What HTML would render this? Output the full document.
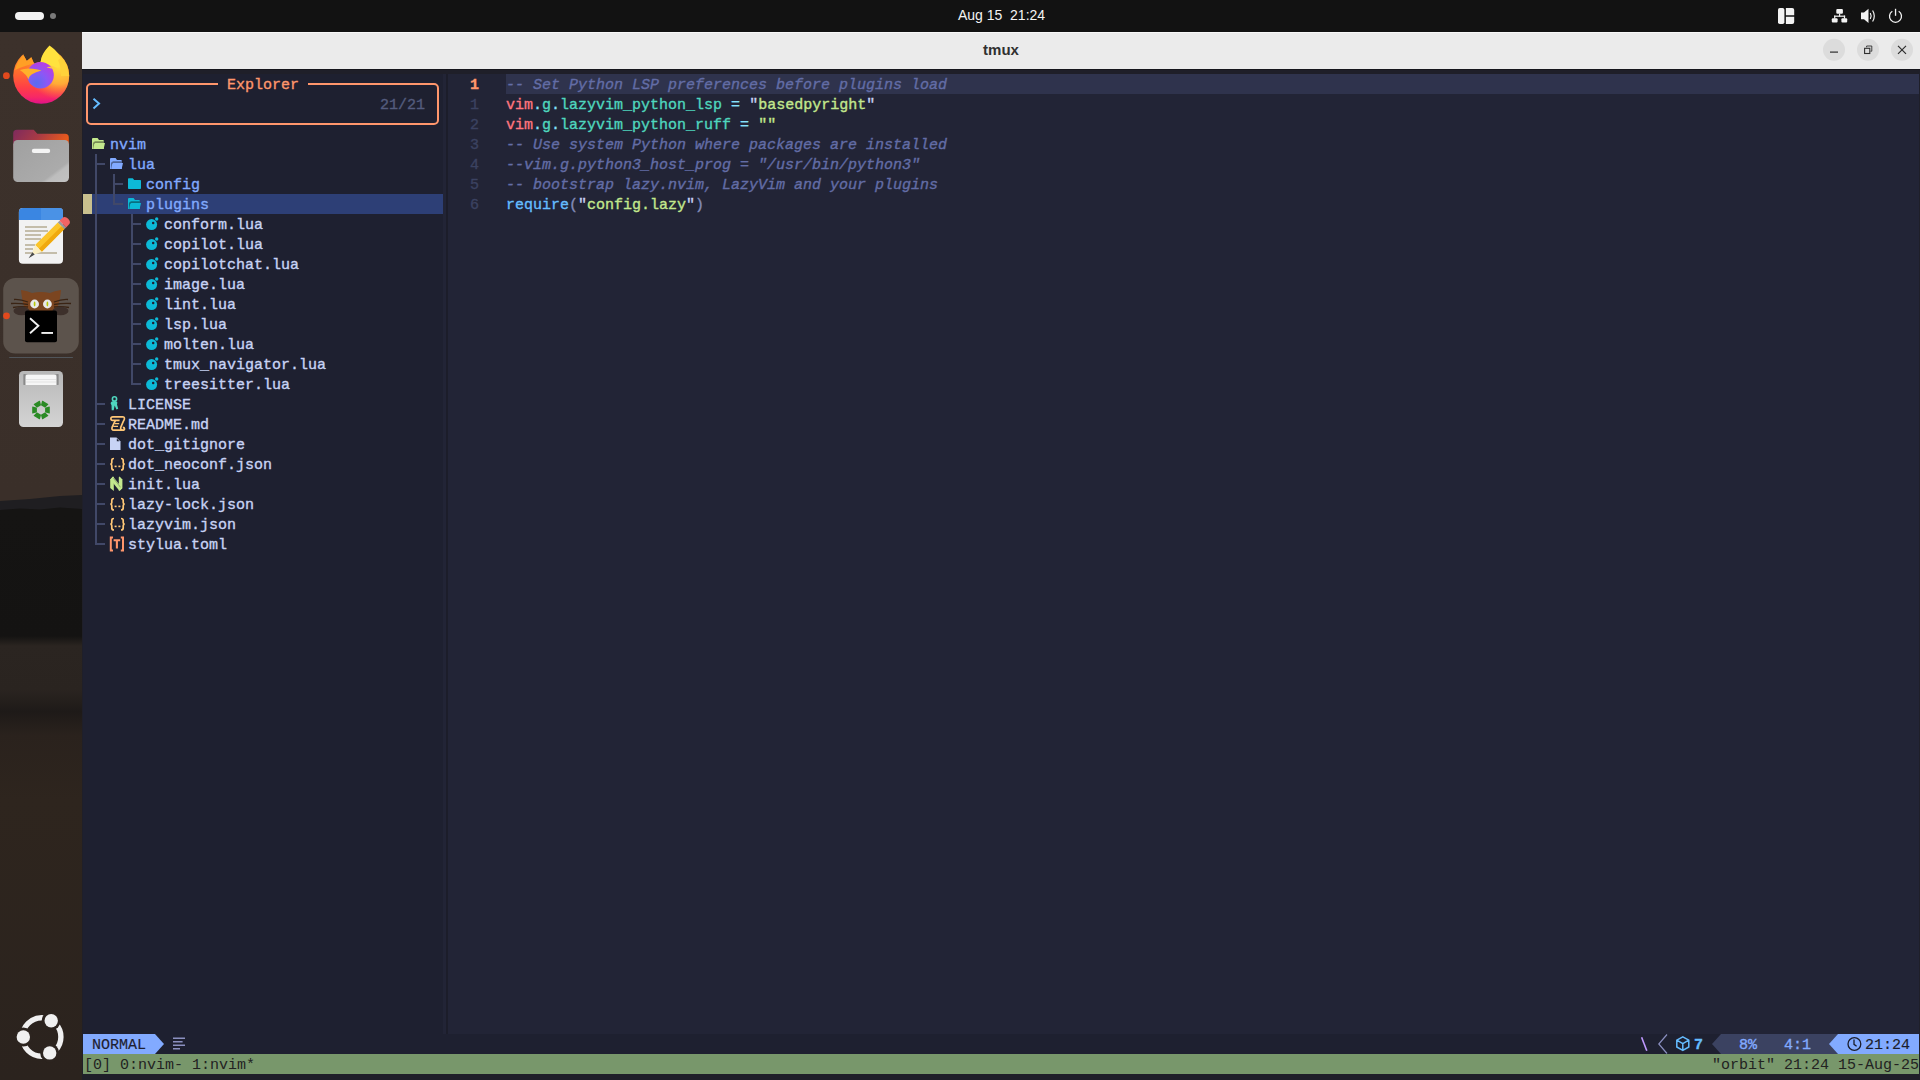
<!DOCTYPE html><html><head><meta charset="utf-8"><style>
html,body{margin:0;padding:0;}
body{width:1920px;height:1080px;position:relative;overflow:hidden;background:#1f1f29;font-family:"Liberation Mono",monospace;}
.t{position:absolute;white-space:pre;font-family:"Liberation Mono",monospace;font-size:15px;line-height:20px;height:20px;padding-top:2px;box-sizing:border-box;-webkit-text-stroke:0.35px currentColor;}
.s{position:absolute;}
.ns{-webkit-text-stroke:0;}
svg{position:absolute;overflow:visible;}
</style></head><body>
<div style="position:absolute;left:0px;top:0px;width:1920px;height:32px;background:#121212"></div>
<div style="position:absolute;left:15px;top:12px;width:29px;height:8px;background:#f2f2f2;border-radius:4px"></div>
<div style="position:absolute;left:50px;top:13px;width:6px;height:6px;background:#7a7a7a;border-radius:3px"></div>
<div style="position:absolute;left:0;top:5px;width:2003px;text-align:center;font-family:'Liberation Sans',sans-serif;font-size:14px;line-height:20px;color:#f4f4f4">Aug 15&nbsp;&nbsp;21:24</div>
<div style="position:absolute;left:0px;top:32px;width:82px;height:1048px;background:linear-gradient(to bottom,#3c312b 0px,#3b302a 268px,#3a2f29 462px,#3a2f29 478px,#151413 480px,#141312 604px,#2b2521 614px,#2a2420 658px,#1e1a18 680px,#2a221d 703px,#2e251e 768px,#2b231e 1048px)"></div>
<svg style="left:0;top:490px" width="82" height="24"><path d="M0,11 L30,9 L60,6 L82,5 V22 H0 Z" fill="#1f1e21"/><path d="M0,20 L20,18.5 L40,19.5 L60,17.5 L82,19 V24 H0 Z" fill="#151413"/></svg>
<svg style="left:0;top:32px" width="82" height="1048" viewBox="0 32 82 1048">
<defs>
<linearGradient id="ffb" x1="0.5" y1="0" x2="0.5" y2="1"><stop offset="0" stop-color="#ffa028"/><stop offset="0.45" stop-color="#ff6a2e"/><stop offset="0.72" stop-color="#ff3d48"/><stop offset="0.88" stop-color="#f72866"/><stop offset="1" stop-color="#e0118a"/></linearGradient>
<radialGradient id="ffy" cx="0.82" cy="0.32" r="0.6"><stop offset="0" stop-color="#ffe23e" stop-opacity="1"/><stop offset="0.55" stop-color="#ffbc36" stop-opacity="0.85"/><stop offset="1" stop-color="#ff8a30" stop-opacity="0"/></radialGradient>
<radialGradient id="ffg" cx="0.35" cy="0.8" r="0.9"><stop offset="0" stop-color="#5a6cf0"/><stop offset="0.45" stop-color="#8a58f6"/><stop offset="1" stop-color="#c038e0"/></radialGradient>
<linearGradient id="fltab" x1="0" y1="0" x2="1" y2="0.3"><stop offset="0" stop-color="#7d2a5e"/><stop offset="0.5" stop-color="#a83a45"/><stop offset="1" stop-color="#e85a1c"/></linearGradient>
<linearGradient id="flbody" x1="0" y1="0" x2="1" y2="1"><stop offset="0" stop-color="#a0a0a0"/><stop offset="0.75" stop-color="#ababab"/><stop offset="0.8" stop-color="#bdbdbd"/><stop offset="1" stop-color="#c2c2c2"/></linearGradient>
<linearGradient id="trash" x1="0" y1="0" x2="0" y2="1"><stop offset="0" stop-color="#b8b8b8"/><stop offset="1" stop-color="#d4d4d4"/></linearGradient>
</defs>
<!-- firefox -->
<circle cx="6.4" cy="75.7" r="3.4" fill="#e2491d"/>
<circle cx="41.2" cy="75.8" r="28" fill="url(#ffb)"/><circle cx="41.2" cy="75.8" r="28" fill="url(#ffy)"/>
<path d="M23.6,55.2 L26.8,61 L31.3,57.2 L34,63.5 L40.5,61.8 Q42.5,54 49.5,45.6 L49.5,40 L20,40 Z" fill="#3b302a"/>
<path d="M49.5,45.6 C44.5,51 41,56 40.8,62 L58,68 C62,64 62,58 60.5,58.5 C58,52 54,49 49.5,45.6 Z" fill="#ffe23e"/>
<path d="M60.5,58.5 C64,62 68,68 69,76 L61,76 C61,70 60,64 58,60 Z" fill="#ffd23a"/>
<path d="M15,70 Q17,61 23.6,55.2 L26.8,61 L31.3,57.2 L34,63.5 Q26,65 15,70 Z" fill="#ff9f25"/>
<circle cx="40.5" cy="75.2" r="13.3" fill="url(#ffg)"/>
<path d="M19.8,70 Q26,67.6 33,68.8 Q38,69.6 41.5,70.6 Q35.5,72.4 32,74.2 Q28.6,76.5 28.6,79.6 Q26.6,74.4 19.8,70 Z" fill="#ffb12a"/>
<path d="M46.5,67.2 Q50.5,66 53.5,68.8 Q50,68.6 46.5,67.2 Z" fill="#ffcc44"/>
<!-- files -->
<path d="M13.2,133.5 Q13.2,129.8 17,129.8 H33.7 L37.3,133.8 H65 Q68.8,133.8 68.8,137.5 V150 H13.2 Z" fill="url(#fltab)"/>
<rect x="13.2" y="139.9" width="55.8" height="42.1" rx="4.5" fill="url(#flbody)"/>
<rect x="31.8" y="148.8" width="18.4" height="4.2" rx="2.1" fill="#f4f4f4"/>
<!-- text editor -->
<rect x="18.9" y="208" width="44.1" height="55.7" rx="4" fill="#f2f2f2"/>
<path d="M18.9,220 V212 Q18.9,208 22.9,208 H59 Q63,208 63,212 V220 Z" fill="#3a86e2"/>
<path d="M41,208 H59 Q63,208 63,212 V220 H41 Z" fill="#4a92e6"/>
<g fill="#c4bdaa"><rect x="25" y="226" width="22" height="2"/><rect x="25" y="230" width="23" height="2"/><rect x="25" y="234" width="16" height="2"/><rect x="25" y="238" width="16" height="2"/><rect x="25" y="244" width="10" height="2"/><rect x="25" y="248" width="8" height="2"/><rect x="25" y="252" width="32" height="2"/></g>
<g transform="translate(50.5,236.4) rotate(-45)">
<rect x="-17" y="-4.7" width="32" height="9.4" fill="#fbc52a"/>
<rect x="-17" y="0.6" width="32" height="4.1" fill="#f0a90e"/>
<rect x="15" y="-4.7" width="2.4" height="9.4" fill="#9a9a9a"/>
<path d="M17.4,-4.7 H21 Q25,-4.7 25,0 Q25,4.7 21,4.7 H17.4 Z" fill="#f26464"/>
<path d="M-17,-4.7 L-27.5,0 L-17,4.7 Z" fill="#fbefc4"/>
<path d="M-24,-1.6 L-31,0 L-24,1.6 Z" fill="#4a4a4a"/>
</g>
<!-- terminal active -->
<rect x="3.2" y="278" width="75.6" height="75.6" rx="12" fill="#5c534c"/>
<circle cx="6.5" cy="315.8" r="3.4" fill="#e2491d"/>
<path d="M21,290 Q28,291 32,293 Q41,291 50,293 Q54,291 61,290 Q60,300 58,306 L56,311 H26 L24,306 Q22,300 21,290 Z" fill="#7b4520"/>
<g stroke="#3a2414" stroke-width="1.3" fill="none">
<path d="M28,302 Q20,299 14,299.5"/><path d="M28,304.5 Q19,303 11,303.5"/><path d="M28,307 Q20,306 13,307.5"/>
<path d="M54,302 Q62,299 68,299.5"/><path d="M54,304.5 Q63,303 71,303.5"/><path d="M54,307 Q62,306 69,307.5"/>
</g>
<circle cx="34.6" cy="304" r="4.4" fill="#e8e8e8"/><circle cx="47.4" cy="304" r="4.4" fill="#e8e8e8"/>
<ellipse cx="34.6" cy="304" rx="0.9" ry="2.4" fill="#b8c808"/><ellipse cx="47.4" cy="304" rx="0.9" ry="2.4" fill="#b8c808"/>
<ellipse cx="21.5" cy="311" rx="8" ry="4.2" fill="#3d302b"/><ellipse cx="60.5" cy="311" rx="8" ry="4.2" fill="#3d302b"/>
<rect x="25" y="310.6" width="32" height="31.6" rx="2" fill="#000"/>
<path d="M30,318.3 L38.4,325.8 L30,333.3" fill="none" stroke="#f0f0f0" stroke-width="1.9"/>
<rect x="41.4" y="332" width="11.6" height="1.9" fill="#f0f0f0"/>
<rect x="9.2" y="357" width="63.7" height="1" fill="#50555a"/>
<!-- trash -->
<rect x="19" y="371" width="44" height="56" rx="4.5" fill="url(#trash)"/>
<rect x="23.5" y="374" width="35" height="11" rx="1.5" fill="#9e9e9e"/>
<path d="M25,385 V377 Q25,374.5 28,374.5 H54 Q57,374.5 57,377 V385 Z" fill="#f6f6f6"/><path d="M26,379.5 H56 M26,382 H56" stroke="#dedede" stroke-width="0.8"/><rect x="23.5" y="374" width="2" height="11" fill="#8a8a8a"/><rect x="56.5" y="374" width="2" height="11" fill="#8a8a8a"/>
<g transform="translate(41,410)" fill="#2a8a24"><path d="M-2.3,-2 Q-2.3,-2.5 -1.8,-2.6 L1.9,-3.6 Q2.4,-3.6 2.4,-3.1 L2.4,3.1 Q2.4,3.6 1.9,3.6 L-1.8,2.6 Q-2.3,2.5 -2.3,2 Z" transform="rotate(0) translate(6.4,0)"/><path d="M-2.3,-2 Q-2.3,-2.5 -1.8,-2.6 L1.9,-3.6 Q2.4,-3.6 2.4,-3.1 L2.4,3.1 Q2.4,3.6 1.9,3.6 L-1.8,2.6 Q-2.3,2.5 -2.3,2 Z" transform="rotate(60) translate(6.4,0)"/><path d="M-2.3,-2 Q-2.3,-2.5 -1.8,-2.6 L1.9,-3.6 Q2.4,-3.6 2.4,-3.1 L2.4,3.1 Q2.4,3.6 1.9,3.6 L-1.8,2.6 Q-2.3,2.5 -2.3,2 Z" transform="rotate(120) translate(6.4,0)"/><path d="M-2.3,-2 Q-2.3,-2.5 -1.8,-2.6 L1.9,-3.6 Q2.4,-3.6 2.4,-3.1 L2.4,3.1 Q2.4,3.6 1.9,3.6 L-1.8,2.6 Q-2.3,2.5 -2.3,2 Z" transform="rotate(180) translate(6.4,0)"/><path d="M-2.3,-2 Q-2.3,-2.5 -1.8,-2.6 L1.9,-3.6 Q2.4,-3.6 2.4,-3.1 L2.4,3.1 Q2.4,3.6 1.9,3.6 L-1.8,2.6 Q-2.3,2.5 -2.3,2 Z" transform="rotate(240) translate(6.4,0)"/><path d="M-2.3,-2 Q-2.3,-2.5 -1.8,-2.6 L1.9,-3.6 Q2.4,-3.6 2.4,-3.1 L2.4,3.1 Q2.4,3.6 1.9,3.6 L-1.8,2.6 Q-2.3,2.5 -2.3,2 Z" transform="rotate(300) translate(6.4,0)"/></g>
<!-- ubuntu logo -->
<g transform="translate(41.7,1037)">
<circle r="19.2" fill="none" stroke="#f0f0f0" stroke-width="5.4"/>
<g fill="#2c241f">
<circle cx="-18.4" cy="0" r="9.5"/><circle cx="9.5" cy="-16.2" r="9.5"/><circle cx="8" cy="15.9" r="9.5"/>
</g>
<g fill="#f0f0f0">
<circle cx="-18.4" cy="0" r="6.7"/><circle cx="9.5" cy="-16.2" r="6.7"/><circle cx="8" cy="15.9" r="6.7"/>
</g>
</g>
</svg>

<div style="position:absolute;left:82px;top:32px;width:1838px;height:37px;background:#ebebeb;border-top:1px solid #f8f8f8;box-sizing:border-box"></div>
<div style="position:absolute;left:82px;top:40px;width:1838px;text-align:center;font-family:'Liberation Sans',sans-serif;font-weight:bold;font-size:15px;line-height:20px;color:#303030">tmux</div>
<div style="position:absolute;left:82px;top:69px;width:1838px;height:1011px;background:#1f1f29"></div>
<div style="position:absolute;left:82px;top:69px;width:1838px;height:1px;background:#15151c"></div>
<svg style="left:1760px;top:0" width="160" height="70" viewBox="1760 0 160 70">
<!-- layout icon -->
<rect x="1778" y="8" width="6.4" height="16" rx="1.8" fill="#f2f2f2"/>
<path d="M1785.9,8 H1792.2 Q1794.2,8 1794.2,10 V15.2 H1785.9 Z" fill="#f2f2f2"/>
<path d="M1785.9,16.8 H1794.2 V22 Q1794.2,24 1792.2,24 H1785.9 Z" fill="#f2f2f2"/>
<!-- network -->
<g fill="#f2f2f2">
<rect x="1836.3" y="8.9" width="6.6" height="4.8" rx="1"/>
<rect x="1831.8" y="18.2" width="5.8" height="4.4" rx="1"/>
<rect x="1841.4" y="18.2" width="5.8" height="4.4" rx="1"/>
<rect x="1839" y="13.5" width="1.2" height="3"/>
<rect x="1834.1" y="15.6" width="11" height="1.2"/>
<rect x="1834.1" y="15.6" width="1.2" height="3"/>
<rect x="1843.9" y="15.6" width="1.2" height="3"/>
</g>
<!-- volume -->
<path d="M1861,12.5 H1864 L1868.5,8.8 V23 L1864,19.3 H1861 Z" fill="#f2f2f2"/>
<path d="M1870.3,13 Q1872,16 1870.3,19" fill="none" stroke="#f2f2f2" stroke-width="1.2"/>
<path d="M1872.6,10.5 Q1876,16 1872.6,21.5" fill="none" stroke="#f2f2f2" stroke-width="1.2"/>
<!-- power -->
<path d="M1892.3,11.2 A6,6 0 1 0 1898.7,11.2" fill="none" stroke="#f2f2f2" stroke-width="1.3"/>
<rect x="1894.9" y="8.8" width="1.3" height="7" fill="#f2f2f2"/>
<!-- window buttons -->
<circle cx="1834" cy="49.7" r="11" fill="#dcdcdc"/>
<circle cx="1868" cy="49.7" r="11" fill="#dcdcdc"/>
<circle cx="1902" cy="49.7" r="11" fill="#dcdcdc"/>
<rect x="1830" y="51.5" width="8" height="1.2" fill="#2e2e2e"/>
<rect x="1864.6" y="48.3" width="5.2" height="5.2" fill="none" stroke="#2e2e2e" stroke-width="1.1"/>
<path d="M1866.6,47.3 V46 H1871.8 V51.2 H1870.5" fill="none" stroke="#2e2e2e" stroke-width="0.9"/>
<path d="M1898,45.9 L1906,53.9 M1906,45.9 L1898,53.9" stroke="#2e2e2e" stroke-width="1.2"/>
</svg>

<div style="position:absolute;left:83px;top:74px;width:360px;height:960px;background:#1e2030"></div>
<div style="position:absolute;left:443px;top:74px;width:1476px;height:960px;background:#222436"></div>
<div style="position:absolute;left:446px;top:74px;width:2px;height:960px;background:#1c1d2a"></div>
<div style="position:absolute;left:83px;top:1034px;width:1836px;height:20px;background:#1e2030"></div>
<div style="position:absolute;left:83px;top:1054px;width:1836px;height:20px;background:#78976b"></div>
<div style="position:absolute;left:86px;top:83px;width:353px;height:42px;box-sizing:border-box;border:2px solid #ff966c;border-radius:5px"></div>
<div style="position:absolute;left:218px;top:76px;width:90px;height:16px;background:#1e2030"></div>
<div class="t" style="left:227px;top:74px;"><span style="color:#ff966c">Explorer</span></div>
<svg style="left:92px;top:97px" width="10" height="14"><polyline points="1.5,1.8 7,6.6 1.5,11.4" fill="none" stroke="#65bcff" stroke-width="2"/></svg>
<div class="t" style="left:380px;top:94px;"><span style="color:#545c7e">21/21</span></div>
<div style="position:absolute;left:83px;top:194px;width:360px;height:20px;background:#2d3f76"></div>
<div style="position:absolute;left:83px;top:194px;width:9px;height:20px;background:#c9c08e"></div>
<svg style="left:92px;top:134px" width="16" height="20" viewBox="0 0 16 20"><path d="M0,5 Q0,4 1,4 H5.6 L7,6 H11 Q11.8,6 11.8,6.8 V15 H0 Z" fill="#c3e88d"/><path d="M0.9,15 V9.6 Q1.1,7.3 3.4,7.2 H11.8 V9.2 H3.6 Q2.5,9.4 2.2,11 L1.7,15 Z" fill="#000" fill-opacity="0.4"/><path d="M3.3,9.1 H13 L11.6,15 H1.4 Q1.7,10 3.3,9.1 Z" fill="#c3e88d"/></svg>
<div class="t" style="left:110px;top:134px;"><span style="color:#82aaff">nvim</span></div>
<div style="position:absolute;left:95px;top:154px;width:2px;height:20px;background:#414868"></div>
<div style="position:absolute;left:95px;top:163px;width:10px;height:2px;background:#414868"></div>
<svg style="left:110px;top:154px" width="16" height="20" viewBox="0 0 16 20"><path d="M0,5 Q0,4 1,4 H5.6 L7,6 H11 Q11.8,6 11.8,6.8 V15 H0 Z" fill="#82aaff"/><path d="M0.9,15 V9.6 Q1.1,7.3 3.4,7.2 H11.8 V9.2 H3.6 Q2.5,9.4 2.2,11 L1.7,15 Z" fill="#000" fill-opacity="0.4"/><path d="M3.3,9.1 H13 L11.6,15 H1.4 Q1.7,10 3.3,9.1 Z" fill="#82aaff"/></svg>
<div class="t" style="left:128px;top:154px;"><span style="color:#82aaff">lua</span></div>
<div style="position:absolute;left:95px;top:174px;width:2px;height:20px;background:#414868"></div>
<div style="position:absolute;left:113px;top:174px;width:2px;height:20px;background:#414868"></div>
<div style="position:absolute;left:113px;top:183px;width:10px;height:2px;background:#414868"></div>
<svg style="left:128px;top:174px" width="16" height="20" viewBox="0 0 16 20"><path d="M0,5 Q0,4.2 0.8,4.2 H4.8 L6.2,6 H12.2 Q13,6 13,6.8 V14.2 Q13,15 12.2,15 H0.8 Q0,15 0,14.2 Z" fill="#0db9d7"/></svg>
<div class="t" style="left:146px;top:174px;"><span style="color:#82aaff">config</span></div>
<div style="position:absolute;left:95px;top:194px;width:2px;height:20px;background:#414868"></div>
<div style="position:absolute;left:113px;top:194px;width:2px;height:11px;background:#414868"></div>
<div style="position:absolute;left:113px;top:203px;width:10px;height:2px;background:#414868"></div>
<svg style="left:128px;top:194px" width="16" height="20" viewBox="0 0 16 20"><path d="M0,5 Q0,4 1,4 H5.6 L7,6 H11 Q11.8,6 11.8,6.8 V15 H0 Z" fill="#0db9d7"/><path d="M0.9,15 V9.6 Q1.1,7.3 3.4,7.2 H11.8 V9.2 H3.6 Q2.5,9.4 2.2,11 L1.7,15 Z" fill="#000" fill-opacity="0.4"/><path d="M3.3,9.1 H13 L11.6,15 H1.4 Q1.7,10 3.3,9.1 Z" fill="#0db9d7"/></svg>
<div class="t" style="left:146px;top:194px;"><span style="color:#82aaff">plugins</span></div>
<div style="position:absolute;left:95px;top:214px;width:2px;height:20px;background:#414868"></div>
<div style="position:absolute;left:131px;top:214px;width:2px;height:20px;background:#414868"></div>
<div style="position:absolute;left:131px;top:223px;width:10px;height:2px;background:#414868"></div>
<svg style="left:146px;top:214px" width="16" height="20" viewBox="0 0 16 20"><circle cx="5.6" cy="10.6" r="5.5" fill="#0db9d7"/><circle cx="7.2" cy="9" r="1.25" fill="#1e2030"/><circle cx="10.7" cy="5" r="1.7" fill="#0db9d7"/></svg>
<div class="t" style="left:164px;top:214px;"><span style="color:#c8d3f5">conform.lua</span></div>
<div style="position:absolute;left:95px;top:234px;width:2px;height:20px;background:#414868"></div>
<div style="position:absolute;left:131px;top:234px;width:2px;height:20px;background:#414868"></div>
<div style="position:absolute;left:131px;top:243px;width:10px;height:2px;background:#414868"></div>
<svg style="left:146px;top:234px" width="16" height="20" viewBox="0 0 16 20"><circle cx="5.6" cy="10.6" r="5.5" fill="#0db9d7"/><circle cx="7.2" cy="9" r="1.25" fill="#1e2030"/><circle cx="10.7" cy="5" r="1.7" fill="#0db9d7"/></svg>
<div class="t" style="left:164px;top:234px;"><span style="color:#c8d3f5">copilot.lua</span></div>
<div style="position:absolute;left:95px;top:254px;width:2px;height:20px;background:#414868"></div>
<div style="position:absolute;left:131px;top:254px;width:2px;height:20px;background:#414868"></div>
<div style="position:absolute;left:131px;top:263px;width:10px;height:2px;background:#414868"></div>
<svg style="left:146px;top:254px" width="16" height="20" viewBox="0 0 16 20"><circle cx="5.6" cy="10.6" r="5.5" fill="#0db9d7"/><circle cx="7.2" cy="9" r="1.25" fill="#1e2030"/><circle cx="10.7" cy="5" r="1.7" fill="#0db9d7"/></svg>
<div class="t" style="left:164px;top:254px;"><span style="color:#c8d3f5">copilotchat.lua</span></div>
<div style="position:absolute;left:95px;top:274px;width:2px;height:20px;background:#414868"></div>
<div style="position:absolute;left:131px;top:274px;width:2px;height:20px;background:#414868"></div>
<div style="position:absolute;left:131px;top:283px;width:10px;height:2px;background:#414868"></div>
<svg style="left:146px;top:274px" width="16" height="20" viewBox="0 0 16 20"><circle cx="5.6" cy="10.6" r="5.5" fill="#0db9d7"/><circle cx="7.2" cy="9" r="1.25" fill="#1e2030"/><circle cx="10.7" cy="5" r="1.7" fill="#0db9d7"/></svg>
<div class="t" style="left:164px;top:274px;"><span style="color:#c8d3f5">image.lua</span></div>
<div style="position:absolute;left:95px;top:294px;width:2px;height:20px;background:#414868"></div>
<div style="position:absolute;left:131px;top:294px;width:2px;height:20px;background:#414868"></div>
<div style="position:absolute;left:131px;top:303px;width:10px;height:2px;background:#414868"></div>
<svg style="left:146px;top:294px" width="16" height="20" viewBox="0 0 16 20"><circle cx="5.6" cy="10.6" r="5.5" fill="#0db9d7"/><circle cx="7.2" cy="9" r="1.25" fill="#1e2030"/><circle cx="10.7" cy="5" r="1.7" fill="#0db9d7"/></svg>
<div class="t" style="left:164px;top:294px;"><span style="color:#c8d3f5">lint.lua</span></div>
<div style="position:absolute;left:95px;top:314px;width:2px;height:20px;background:#414868"></div>
<div style="position:absolute;left:131px;top:314px;width:2px;height:20px;background:#414868"></div>
<div style="position:absolute;left:131px;top:323px;width:10px;height:2px;background:#414868"></div>
<svg style="left:146px;top:314px" width="16" height="20" viewBox="0 0 16 20"><circle cx="5.6" cy="10.6" r="5.5" fill="#0db9d7"/><circle cx="7.2" cy="9" r="1.25" fill="#1e2030"/><circle cx="10.7" cy="5" r="1.7" fill="#0db9d7"/></svg>
<div class="t" style="left:164px;top:314px;"><span style="color:#c8d3f5">lsp.lua</span></div>
<div style="position:absolute;left:95px;top:334px;width:2px;height:20px;background:#414868"></div>
<div style="position:absolute;left:131px;top:334px;width:2px;height:20px;background:#414868"></div>
<div style="position:absolute;left:131px;top:343px;width:10px;height:2px;background:#414868"></div>
<svg style="left:146px;top:334px" width="16" height="20" viewBox="0 0 16 20"><circle cx="5.6" cy="10.6" r="5.5" fill="#0db9d7"/><circle cx="7.2" cy="9" r="1.25" fill="#1e2030"/><circle cx="10.7" cy="5" r="1.7" fill="#0db9d7"/></svg>
<div class="t" style="left:164px;top:334px;"><span style="color:#c8d3f5">molten.lua</span></div>
<div style="position:absolute;left:95px;top:354px;width:2px;height:20px;background:#414868"></div>
<div style="position:absolute;left:131px;top:354px;width:2px;height:20px;background:#414868"></div>
<div style="position:absolute;left:131px;top:363px;width:10px;height:2px;background:#414868"></div>
<svg style="left:146px;top:354px" width="16" height="20" viewBox="0 0 16 20"><circle cx="5.6" cy="10.6" r="5.5" fill="#0db9d7"/><circle cx="7.2" cy="9" r="1.25" fill="#1e2030"/><circle cx="10.7" cy="5" r="1.7" fill="#0db9d7"/></svg>
<div class="t" style="left:164px;top:354px;"><span style="color:#c8d3f5">tmux_navigator.lua</span></div>
<div style="position:absolute;left:95px;top:374px;width:2px;height:20px;background:#414868"></div>
<div style="position:absolute;left:131px;top:374px;width:2px;height:11px;background:#414868"></div>
<div style="position:absolute;left:131px;top:383px;width:10px;height:2px;background:#414868"></div>
<svg style="left:146px;top:374px" width="16" height="20" viewBox="0 0 16 20"><circle cx="5.6" cy="10.6" r="5.5" fill="#0db9d7"/><circle cx="7.2" cy="9" r="1.25" fill="#1e2030"/><circle cx="10.7" cy="5" r="1.7" fill="#0db9d7"/></svg>
<div class="t" style="left:164px;top:374px;"><span style="color:#c8d3f5">treesitter.lua</span></div>
<div style="position:absolute;left:95px;top:394px;width:2px;height:20px;background:#414868"></div>
<div style="position:absolute;left:95px;top:403px;width:10px;height:2px;background:#414868"></div>
<svg style="left:110px;top:394px" width="16" height="20" viewBox="0 0 16 20"><circle cx="4.5" cy="4.9" r="2.1" fill="none" stroke="#4fd6be" stroke-width="1.6"/><path d="M0.6,9.2 Q1.2,6.9 4.4,6.9 Q7.2,6.9 7.4,8.6 L7,10.4 L8.2,14.8 L6.4,15.6 L4.7,11.4 L3.7,16.2 L1.7,16.2 L1.5,11.2 Z" fill="#4fd6be"/></svg>
<div class="t" style="left:128px;top:394px;"><span style="color:#c8d3f5">LICENSE</span></div>
<div style="position:absolute;left:95px;top:414px;width:2px;height:20px;background:#414868"></div>
<div style="position:absolute;left:95px;top:423px;width:10px;height:2px;background:#414868"></div>
<svg style="left:110px;top:414px" width="16" height="20" viewBox="0 0 16 20"><path d="M9.6,6.4 H2.6 Q0.9,6.4 0.9,4.6 Q0.9,2.8 2.8,2.8 H12.6 Q14.6,2.8 14.4,4.8 Q14.2,6 13.4,7.2 L10.8,13.2 Q10.2,16.2 12.6,16.2 Q14.5,16.2 14.5,14.7 Q14.5,13.4 12.8,13.4" fill="none" stroke="#ffc777" stroke-width="1.7"/><path d="M5.4,6.4 L2.2,13 Q1.2,16.2 3.8,16.2 H12.6" fill="none" stroke="#ffc777" stroke-width="1.7"/><path d="M4.8,9.6 H9.2 M3.2,12.4 H8" stroke="#ffc777" stroke-width="1.4"/></svg>
<div class="t" style="left:128px;top:414px;"><span style="color:#c8d3f5">README.md</span></div>
<div style="position:absolute;left:95px;top:434px;width:2px;height:20px;background:#414868"></div>
<div style="position:absolute;left:95px;top:443px;width:10px;height:2px;background:#414868"></div>
<svg style="left:110px;top:434px" width="16" height="20" viewBox="0 0 16 20"><path d="M0,3.5 H6.5 L10.5,7.5 V16 H0 Z" fill="#c8d3f5"/><path d="M6.8,4.5 V7.2 H9.5 Z" fill="#1e2030"/></svg>
<div class="t" style="left:128px;top:434px;"><span style="color:#c8d3f5">dot_gitignore</span></div>
<div style="position:absolute;left:95px;top:454px;width:2px;height:20px;background:#414868"></div>
<div style="position:absolute;left:95px;top:463px;width:10px;height:2px;background:#414868"></div>
<svg style="left:110px;top:454px" width="16" height="20" viewBox="0 0 16 20"><path d="M4,4.5 Q1.8,4.5 1.8,6.5 V8.6 Q1.8,10 0.4,10.2 Q1.8,10.4 1.8,11.8 V14 Q1.8,16 4,16" fill="none" stroke="#ffc777" stroke-width="1.7"/><path d="M11,4.5 Q13.2,4.5 13.2,6.5 V8.6 Q13.2,10 14.6,10.2 Q13.2,10.4 13.2,11.8 V14 Q13.2,16 11,16" fill="none" stroke="#ffc777" stroke-width="1.7"/><rect x="4.6" y="11.6" width="2" height="1.6" fill="#ffc777"/><rect x="8.4" y="11.6" width="2" height="1.6" fill="#ffc777"/></svg>
<div class="t" style="left:128px;top:454px;"><span style="color:#c8d3f5">dot_neoconf.json</span></div>
<div style="position:absolute;left:95px;top:474px;width:2px;height:20px;background:#414868"></div>
<div style="position:absolute;left:95px;top:483px;width:10px;height:2px;background:#414868"></div>
<svg style="left:110px;top:474px" width="16" height="20" viewBox="0 0 16 20"><path d="M0.2,5.6 L3,2.6 L3.8,3.3 V17 L0.2,14 Z" fill="#c3e88d"/><path d="M12.4,5.6 L9.6,2.6 L8.8,3.3 V17 L12.4,14 Z" fill="#c3e88d"/><path d="M3,2.6 L12.4,14.2 L9.6,17 L0.2,5.4 Z" fill="#c3e88d"/><path d="M3.4,4.2 L10.6,13.4" stroke="#1e2030" stroke-width="0.5" opacity="0.6"/></svg>
<div class="t" style="left:128px;top:474px;"><span style="color:#c8d3f5">init.lua</span></div>
<div style="position:absolute;left:95px;top:494px;width:2px;height:20px;background:#414868"></div>
<div style="position:absolute;left:95px;top:503px;width:10px;height:2px;background:#414868"></div>
<svg style="left:110px;top:494px" width="16" height="20" viewBox="0 0 16 20"><path d="M4,4.5 Q1.8,4.5 1.8,6.5 V8.6 Q1.8,10 0.4,10.2 Q1.8,10.4 1.8,11.8 V14 Q1.8,16 4,16" fill="none" stroke="#ffc777" stroke-width="1.7"/><path d="M11,4.5 Q13.2,4.5 13.2,6.5 V8.6 Q13.2,10 14.6,10.2 Q13.2,10.4 13.2,11.8 V14 Q13.2,16 11,16" fill="none" stroke="#ffc777" stroke-width="1.7"/><rect x="4.6" y="11.6" width="2" height="1.6" fill="#ffc777"/><rect x="8.4" y="11.6" width="2" height="1.6" fill="#ffc777"/></svg>
<div class="t" style="left:128px;top:494px;"><span style="color:#c8d3f5">lazy-lock.json</span></div>
<div style="position:absolute;left:95px;top:514px;width:2px;height:20px;background:#414868"></div>
<div style="position:absolute;left:95px;top:523px;width:10px;height:2px;background:#414868"></div>
<svg style="left:110px;top:514px" width="16" height="20" viewBox="0 0 16 20"><path d="M4,4.5 Q1.8,4.5 1.8,6.5 V8.6 Q1.8,10 0.4,10.2 Q1.8,10.4 1.8,11.8 V14 Q1.8,16 4,16" fill="none" stroke="#ffc777" stroke-width="1.7"/><path d="M11,4.5 Q13.2,4.5 13.2,6.5 V8.6 Q13.2,10 14.6,10.2 Q13.2,10.4 13.2,11.8 V14 Q13.2,16 11,16" fill="none" stroke="#ffc777" stroke-width="1.7"/><rect x="4.6" y="11.6" width="2" height="1.6" fill="#ffc777"/><rect x="8.4" y="11.6" width="2" height="1.6" fill="#ffc777"/></svg>
<div class="t" style="left:128px;top:514px;"><span style="color:#c8d3f5">lazyvim.json</span></div>
<div style="position:absolute;left:95px;top:534px;width:2px;height:11px;background:#414868"></div>
<div style="position:absolute;left:95px;top:543px;width:10px;height:2px;background:#414868"></div>
<svg style="left:110px;top:534px" width="16" height="20" viewBox="0 0 16 20"><path d="M3,3.4 H0.8 V16.6 H3" fill="none" stroke="#ff966c" stroke-width="2"/><path d="M10.8,3.4 H13 V16.6 H10.8" fill="none" stroke="#ff966c" stroke-width="2"/><path d="M3.6,6.2 H10.2 M6.9,6.2 V14.4" stroke="#ff966c" stroke-width="2.1"/></svg>
<div class="t" style="left:128px;top:534px;"><span style="color:#c8d3f5">stylua.toml</span></div>
<div style="position:absolute;left:506px;top:74px;width:1413px;height:20px;background:#2f334d"></div>
<div class="t" style="left:470px;top:74px;"><span style="color:#ff966c;font-weight:bold">1</span></div>
<div class="t" style="left:470px;top:94px;"><span style="color:#3b4261">1</span></div>
<div class="t" style="left:470px;top:114px;"><span style="color:#3b4261">2</span></div>
<div class="t" style="left:470px;top:134px;"><span style="color:#3b4261">3</span></div>
<div class="t" style="left:470px;top:154px;"><span style="color:#3b4261">4</span></div>
<div class="t" style="left:470px;top:174px;"><span style="color:#3b4261">5</span></div>
<div class="t" style="left:470px;top:194px;"><span style="color:#3b4261">6</span></div>
<div class="t" style="left:506px;top:74px;"><span style="font-style:italic;color:#636da6">-- Set Python LSP preferences before plugins load</span></div>
<div class="t" style="left:506px;top:94px;"><span style="color:#ff757f">vim</span><span style="color:#86e1fc">.</span><span style="color:#4fd6be">g</span><span style="color:#86e1fc">.</span><span style="color:#4fd6be">lazyvim_python_lsp</span> <span style="color:#86e1fc">=</span> <span style="color:#c8d3f5">"</span><span style="color:#c3e88d">basedpyright</span><span style="color:#c8d3f5">"</span></div>
<div class="t" style="left:506px;top:114px;"><span style="color:#ff757f">vim</span><span style="color:#86e1fc">.</span><span style="color:#4fd6be">g</span><span style="color:#86e1fc">.</span><span style="color:#4fd6be">lazyvim_python_ruff</span> <span style="color:#86e1fc">=</span> <span style="color:#c3e88d">""</span></div>
<div class="t" style="left:506px;top:134px;"><span style="font-style:italic;color:#636da6">-- Use system Python where packages are installed</span></div>
<div class="t" style="left:506px;top:154px;"><span style="font-style:italic;color:#636da6">--vim.g.python3_host_prog = "/usr/bin/python3"</span></div>
<div class="t" style="left:506px;top:174px;"><span style="font-style:italic;color:#636da6">-- bootstrap lazy.nvim, LazyVim and your plugins</span></div>
<div class="t" style="left:506px;top:194px;"><span style="color:#65bcff">require</span><span style="color:#828bb8">(</span><span style="color:#c8d3f5">"</span><span style="color:#c3e88d">config.lazy</span><span style="color:#c8d3f5">"</span><span style="color:#828bb8">)</span></div>
<div style="position:absolute;left:83px;top:1034px;width:72px;height:20px;background:#82aaff"></div>
<svg style="left:155px;top:1034px" width="9" height="20"><path d="M0,0 L9,10 L0,20 Z" fill="#82aaff"/></svg>
<div class="t" style="left:92px;top:1034px;-webkit-text-stroke:0.15px #1e2030;"><span style="color:#1e2030">NORMAL</span></div>
<svg style="left:173px;top:1034px" width="12" height="20"><path d="M0,4.3 H12 M0,7.8 H9.6 M0,11.3 H12 M0,14.8 H7" stroke="#8b90c0" stroke-width="1.4"/></svg>
<svg style="left:1640px;top:1034px" width="9" height="20"><path d="M1.6,3.2 L6.8,16.8" stroke="#c099ff" stroke-width="1.6"/></svg>
<svg style="left:1658px;top:1034px" width="9" height="20"><path d="M9,0.5 L0.8,10 L9,19.5" fill="none" stroke="#8a8fc0" stroke-width="1.2"/></svg>
<svg style="left:1676px;top:1034px" width="16" height="20"><path d="M6.8,2.8 L12.8,6.2 V13 L6.8,16.4 L0.8,13 V6.2 Z M0.8,6.2 L6.8,9.6 L12.8,6.2 M6.8,9.6 V16.4" fill="none" stroke="#65bcff" stroke-width="1.5" stroke-linejoin="round"/></svg>
<div class="t" style="left:1694px;top:1034px;"><span style="color:#65bcff;font-weight:bold">7</span></div>
<svg style="left:1712px;top:1034px" width="9" height="20"><path d="M9,0 L0,10 L9,20 Z" fill="#3b4261"/></svg>
<div style="position:absolute;left:1721px;top:1034px;width:108px;height:20px;background:#3b4261"></div>
<div class="t" style="left:1739px;top:1034px;"><span style="color:#82aaff">8%</span>   <span style="color:#82aaff">4:1</span></div>
<svg style="left:1829px;top:1034px" width="9" height="20"><rect width="9" height="20" fill="#3b4261"/><path d="M9,0 L0,10 L9,20 Z" fill="#82aaff"/></svg>
<div style="position:absolute;left:1838px;top:1034px;width:81px;height:20px;background:#82aaff"></div>
<svg style="left:1847px;top:1034px" width="16" height="20"><circle cx="7.4" cy="10" r="6.4" fill="none" stroke="#1b1d2b" stroke-width="1.3"/><path d="M7,5.6 V10.3 L9.6,12.2" fill="none" stroke="#1b1d2b" stroke-width="1.3"/></svg>
<div class="t" style="left:1865px;top:1034px;-webkit-text-stroke:0.15px #1b1d2b;"><span style="color:#1b1d2b">21:24</span></div>
<div class="t" style="left:83px;top:1054px;left:84px;-webkit-text-stroke:0;"><span style="color:#222222">[0] 0:nvim- 1:nvim*</span></div>
<div class="t" style="left:1712px;top:1054px;-webkit-text-stroke:0;"><span style="color:#222222">"orbit" 21:24 15-Aug-25</span></div>
</body></html>
